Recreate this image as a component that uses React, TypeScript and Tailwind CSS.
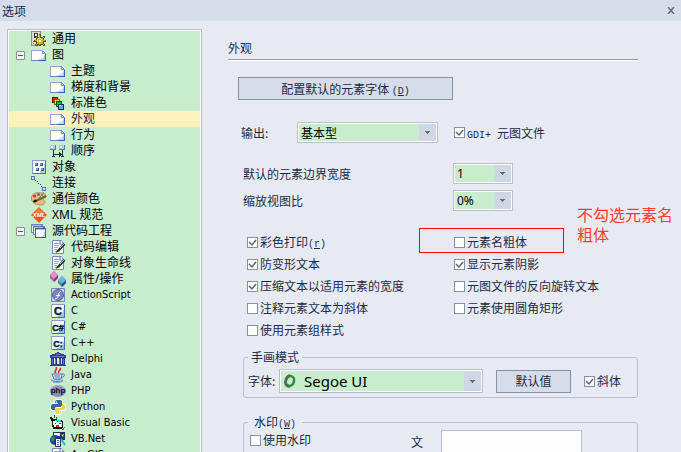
import React, { useState } from 'react'
import clsx from 'clsx'

type IconProps = {
  children: React.ReactNode
  smooth?: boolean
}

const Icon = ({ children, smooth }: IconProps) => (
  <svg
    viewBox="0 0 16 16"
    className="h-4 w-4 shrink-0"
    shapeRendering={smooth ? 'auto' : 'crispEdges'}
    fill="none"
    aria-hidden="true"
  >
    {children}
  </svg>
)

const GeneralIcon = () => (
  <Icon>
    <path d="M0 0h10v15H0z" fill="#8f8f8a" />
    <path d="M1 1h8v13H1z" fill="#dcdcd6" />
    <path d="M3 2h4v5H3z" fill="#333" />
    <path d="M4 3h2v2H4z" fill="#fff" />
    <path d="M2 10h1v1H2zM2 12h1v1H2z" fill="#555" />
    <path d="M8 3h2v12H8zM3 9h12v2H3zM5 5h2v2H5zM12 5h2v2h-2zM4 13h3v2H4zM12 13h2v2h-2zM5 6h8v8H5z" fill="#5d5404" />
    <path d="M8 4h1v10H8zM4 9h10v1H4zM6 7h6v6H6zM5 6h1v1H5zM12 6h1v1h-1zM5 13h1v1H5zM12 13h1v1h-1z" fill="#c4b42c" />
    <path d="M7 7h3v1H7zM6 8h1v3H6zM10 8h1v1h-1z" fill="#f7f09a" />
    <path d="M8 9h2v2H8z" fill="#f4f4ea" />
  </Icon>
)

const PageIcon = () => (
  <Icon>
    <path d="M0 3h12l3 3v8H0z" fill="#fff" />
    <path d="M6 13h8V8h-1v1h-1v1h-2v1H8v1H6z" fill="#dbe4fb" />
    <path d="M10 13h4v-4h-1v2h-1v1h-2z" fill="#b7c9f5" />
    <path d="M0 3h12v1H1v9H0z" fill="#9b9fd2" />
    <path d="M0 13h8v1H0z" fill="#6b83cc" />
    <path d="M8 13h7v1H8z" fill="#3559bd" />
    <path d="M14 7h1v7h-1z" fill="#3c62cf" />
    <path d="M11 3h1v1h1v1h1v1h1v1h-4z" fill="#7d8fd2" />
    <path d="M12 5h1v1h-1z" fill="#fff" />
  </Icon>
)

const ColorsIcon = () => (
  <Icon>
    <path d="M2 2h6v6H2z" fill="#6b0000" />
    <path d="M3 3h4v4H3z" fill="#f01818" />
    <path d="M4 4h6v6H4z" fill="#6a6200" />
    <path d="M5 5h4v4H5z" fill="#f2e40c" />
    <path d="M6 6h6v6H6z" fill="#064f06" />
    <path d="M7 7h4v4H7z" fill="#1cc81c" />
    <path d="M8 9h6v6H8z" fill="#0e2a66" />
    <path d="M9 10h4v4H9z" fill="#5fa8f4" />
    <path d="M9 10h2v1H9z" fill="#c5e2ff" />
  </Icon>
)

const SequenceIcon = () => (
  <Icon>
    <path d="M0 2h6v5H0zM9 2h6v5H9z" fill="#5f7898" />
    <path d="M0 2h5v4H0zM9 2h5v4H9z" fill="#9fd0ee" />
    <path d="M1 3h2v2H1zM10 3h2v2h-2z" fill="#fff" />
    <path d="M3 7h1v7H3zM12 7h1v7h-1zM4 11h8v1H4zM10 10h1v3h-1zM9 9h1v5H9zM2 13h3v1H2zM11 13h3v1h-3z" fill="#222d3a" />
  </Icon>
)

const ObjectIcon = () => (
  <Icon>
    <path d="M1 1h14v14H1z" fill="#8797cf" />
    <path d="M2 2h12v12H2z" fill="#f4f7ff" />
    <path d="M9 14h5V5h-1v4h-1v3H9z" fill="#b9c9f2" />
    <path d="M14 2h1v13H2v-1h12z" fill="#4a66b6" />
    <path d="M4 4h3v3H4zM9 4h3v3H9zM5 9h3v3H5zM10 9h3v3h-3z" fill="#42528f" />
    <path d="M4 4h2v2H4zM9 4h2v2H9zM5 9h2v2H5zM10 9h2v2h-2z" fill="#7d90cc" />
  </Icon>
)

const LinkIcon = () => (
  <Icon>
    <path d="M0 1h4v4H0zM11 12h4v4h-4z" fill="#5273b9" />
    <path d="M1 2h2v2H1zM12 13h2v2h-2z" fill="#d6e6ff" />
    <path d="M4 5h1v1H4zM6 6h1v1H6zM7 8h1v1H7zM9 9h1v1H9zM10 11h1v1h-1z" fill="#34445c" />
  </Icon>
)

const PaletteIcon = () => (
  <Icon smooth>
    <path d="M1 5c1-3 6-4 9-3 3 0 6 2 5 4-1 1-3 1-3 3 2 1 3 2 1 4-3 2-9 1-11-2C0 9 0 7 1 5z" fill="#e3bd84" stroke="#b98c50" />
    <circle cx="3.500" cy="5" r="1.500" fill="#e22525" />
    <circle cx="7.500" cy="3.500" r="1.500" fill="#4b6fe0" />
    <circle cx="11" cy="4" r="1" fill="#34b44a" />
    <path d="M13 1L6 10" stroke="#6c86b8" strokeWidth="1" />
    <path d="M15 5L5 10" stroke="#7a6a12" strokeWidth="2" />
    <path d="M2 11c1-3 3-3 4-1 0 1-2 2-4 1z" fill="#111" />
  </Icon>
)

const XmlIcon = () => (
  <Icon smooth>
    <path d="M8 0l8 8-8 8-8-8z" fill="#f2560e" />
    <path d="M8 1l7 7-7-2-7 2z" fill="#ff7a2c" />
    <text x="8" y="10" textAnchor="middle" fontSize="6" fontWeight="700" fontStyle="italic" fontFamily="Liberation Sans, sans-serif" fill="#fff">XML</text>
  </Icon>
)

const CodeProjectIcon = () => (
  <Icon>
    <path d="M0 1h12v9H0z" fill="#6f86c4" />
    <path d="M1 3h10v6H1z" fill="#fff" />
    <path d="M2 3h12v9H2z" fill="#5d76b8" />
    <path d="M3 5h10v6H3z" fill="#fff" />
    <path d="M4 5h11v10H4z" fill="#45589a" />
    <path d="M5 7h9v7H5z" fill="#fff" />
    <path d="M5 6h9v1H5zM3 4h9v1H3zM1 2h9v1H1z" fill="#a5bcec" />
    <path d="M10 14h4v-5h-1v3h-1v1h-2z" fill="#b7c9f5" />
  </Icon>
)

const EditIcon = () => (
  <Icon smooth>
    <path d="M2.500 1.500h9l2 3v10h-11z" fill="#fff" stroke="#7886b4" />
    <path d="M4 4.500h5M4 6.500h5M4 8.500h4M4 10.500h3M4 12.500h3" stroke="#9aa6c8" />
    <path d="M10 1v4h3" stroke="#5b6ca6" />
    <path d="M14.500 5L8 12" stroke="#1d2a3e" strokeWidth="2.500" />
    <path d="M14 5l-4 4" stroke="#7fa8d4" />
    <path d="M6 14l1-3 2 1z" fill="#111" />
  </Icon>
)

const PropertyIcon = () => (
  <Icon smooth>
    <path d="M4 0l4 4v3l-4 4-4-4V4z" fill="#b45aa4" />
    <path d="M4 0l4 4-4 4-4-4z" fill="#e08fd4" />
    <path d="M4 8l4-4v3l-4 4z" fill="#8c3a80" />
    <path d="M12 5l4 4v3l-4 4-4-4V9z" fill="#3e7fb0" />
    <path d="M12 5l4 4-4 4-4-4z" fill="#74b4dc" />
    <path d="M12 13l4-4v3l-4 4z" fill="#26587f" />
  </Icon>
)

const ActionScriptIcon = () => (
  <Icon smooth>
    <path d="M1.500 1.500h13v13h-13z" fill="#cdd5ef" stroke="#7482bb" />
    <circle cx="8" cy="8" r="5.500" fill="#7d84c4" stroke="#5a60a8" />
    <path d="M11 4.500c-3 0-2 7.500-6 7.500M6 8.500h4" stroke="#fff" />
  </Icon>
)

// Shared square tile of the C family
const LetterIcon = ({ letter }: { letter: string }) => (
  <Icon smooth>
    <path d="M1.500 1.500h13v13h-13z" fill="#f5f8ff" stroke="#8b9bd0" />
    <path d="M14 6v8H6l6-3z" fill="#a9bdec" />
    <path d="M14.500 2v12.500H2" stroke="#4a66b6" />
    <text x="8" y="12" textAnchor="middle" fontSize={letter.length > 1 ? 9 : 11} fontWeight="700" fontFamily="Liberation Sans, sans-serif" fill="#101c3c" stroke="#101c3c" strokeWidth="0.5">{letter}</text>
  </Icon>
)

const DelphiIcon = () => (
  <Icon>
    <path d="M7 1h2v1h2v1h3v1h2v3H0V4h2V3h3V2h2z" fill="#343c94" />
    <path d="M6 3h4v1H6zM2 5h12v1H2z" fill="#6f78c4" />
    <path d="M1 7h3v6H1zM5 7h2v6H5zM9 7h2v6H9zM12 7h3v6h-3z" fill="#2b3284" />
    <path d="M2 8h1v5H2zM5 8h1v5H5zM9 8h1v5H9zM13 8h1v5h-1z" fill="#6f78c4" />
    <path d="M1 13h14v1H1zM0 14h16v1H0z" fill="#343c94" />
  </Icon>
)

const JavaIcon = () => (
  <Icon smooth>
    <path d="M6 6C3 4 8 3 6 0M9 6c-2-2 3-3 1-5" stroke="#e5232b" strokeWidth="1.500" />
    <path d="M2 7h10l-1 5c-2 1-5 1-7 0z" fill="#dce9fa" stroke="#4a76b6" />
    <path d="M12 7c4-1 3 3-1 4" stroke="#4a76b6" />
    <path d="M4 9h6M5 11h5M1 13c3 2 9 2 12 0" stroke="#4a76b6" />
    <path d="M3 15c3 1 7 1 10-1" stroke="#7fa0d4" />
  </Icon>
)

const PhpIcon = () => (
  <Icon smooth>
    <ellipse cx="8" cy="8" rx="8" ry="6" fill="#8d8bb4" />
    <path d="M2 5c3-3 9-3 12 0" stroke="#b9b8dc" />
    <text x="8" y="10" textAnchor="middle" fontSize="8" fontWeight="700" fontFamily="Liberation Sans, sans-serif" fill="#111">php</text>
  </Icon>
)

const PythonIcon = () => (
  <Icon smooth>
    <path d="M8 1c-3 0-3 1-3 3v1H3C1 5 1 7 1 8s0 3 2 3h2V9c0-1 1-1 2-1h3c1 0 2-1 2-2V3c0-2-1-2-4-2zM8 15c3 0 3-1 3-3v-1h2c2 0 2-2 2-3s0-3-2-3h-1v2c0 1-1 2-2 2H7c-1 0-2 1-2 2v2c0 2 1 2 3 2z" stroke="#fff" strokeWidth="2" />
    <path d="M8 1c-3 0-3 1-3 3h3v1H3C1 5 1 7 1 8s0 3 2 3h2V9c0-1 1-1 2-1h3c1 0 2-1 2-2V3c0-2-1-2-4-2z" fill="#3a6a94" />
    <path d="M8 15c3 0 3-1 3-3H8v-1h5c2 0 2-2 2-3s0-3-2-3h-1v2c0 1-1 2-2 2H7c-1 0-2 1-2 2v2c0 2 1 2 3 2z" fill="#f8cf44" />
    <circle cx="6.500" cy="3" r="0.700" fill="#fff" />
    <circle cx="9.500" cy="13" r="0.700" fill="#fff" />
  </Icon>
)

const VisualBasicIcon = () => (
  <Icon>
    <path d="M0 2h2v1h1v1h2v1H3v1H1V4H0z" fill="#111" />
    <path d="M4 0h1v3H4zM6 2h1v2H6z" fill="#14691c" />
    <path d="M2 5h2V4h3v1h5v1h1v7h-1v1H3v-2H2z" fill="#111" />
    <path d="M3 6h2V5h2v2h5v5H4v-2H3z" fill="#fff" />
    <path d="M5 5h6v2H8V6H5z" fill="#27d0d8" />
    <path d="M5 8h1v1H5zM9 8h2v1H9z" fill="#222" />
    <path d="M6 10h3v2H6z" fill="#d02030" />
    <path d="M12 14h1v-1h1v-1h1v1h-1v2h-2z" fill="#777" />
  </Icon>
)

const VbNetIcon = () => (
  <Icon smooth>
    <path d="M3 1h12v8H3z" fill="#23345c" />
    <path d="M4 2h6v3H4z" fill="#e9f2ff" />
    <path d="M10 2l2 2 2-1-1 3z" fill="#f2e266" />
    <circle cx="5" cy="9" r="5" fill="#2432bd" />
    <path d="M1 7c2-2 4-2 4 0s-2 2-1 4c-2 0-3-2-3-4z" fill="#1b9b32" />
    <path d="M5.500 7.500h5v8h-5z" fill="#fff" stroke="#222d4a" />
    <path d="M7 9.500h2M7 11.500h2M7 13.500h2" stroke="#5576b8" />
    <path d="M11 8l4 6" stroke="#2bb6c6" strokeWidth="2" />
  </Icon>
)

type Node = {
  label: string
  icon: React.ReactNode
  children?: Node[]
}

const nodes: Node[] = [
  { label: '通用', icon: <GeneralIcon /> },
  {
    label: '图',
    icon: <PageIcon />,
    children: [
      { label: '主题', icon: <PageIcon /> },
      { label: '梯度和背景', icon: <PageIcon /> },
      { label: '标准色', icon: <ColorsIcon /> },
      { label: '外观', icon: <PageIcon /> },
      { label: '行为', icon: <PageIcon /> },
      { label: '顺序', icon: <SequenceIcon /> },
    ],
  },
  { label: '对象', icon: <ObjectIcon /> },
  { label: '连接', icon: <LinkIcon /> },
  { label: '通信颜色', icon: <PaletteIcon /> },
  { label: 'XML 规范', icon: <XmlIcon /> },
  {
    label: '源代码工程',
    icon: <CodeProjectIcon />,
    children: [
      { label: '代码编辑', icon: <EditIcon /> },
      { label: '对象生命线', icon: <EditIcon /> },
      { label: '属性/操作', icon: <PropertyIcon /> },
      { label: 'ActionScript', icon: <ActionScriptIcon /> },
      { label: 'C', icon: <LetterIcon letter="C" /> },
      { label: 'C#', icon: <LetterIcon letter="C#" /> },
      { label: 'C++', icon: <LetterIcon letter="C:" /> },
      { label: 'Delphi', icon: <DelphiIcon /> },
      { label: 'Java', icon: <JavaIcon /> },
      { label: 'PHP', icon: <PhpIcon /> },
      { label: 'Python', icon: <PythonIcon /> },
      { label: 'Visual Basic', icon: <VisualBasicIcon /> },
      { label: 'VB.Net', icon: <VbNetIcon /> },
      { label: 'ArcGIS', icon: <EditIcon /> },
    ],
  },
]

interface TreeProps {
  items: Node[]
  selected: string
  onSelect: (label: string) => void
  nested?: boolean
}

const isLatin = (label: string) => /^[\x20-\x7e]+$/.test(label)

const Tree = ({ items, selected, onSelect, nested }: TreeProps) => {
  const [closed, setClosed] = useState<string[]>([])

  const toggle = (label: string) => {
    setClosed(prev => prev.includes(label) ? prev.filter(l => l !== label) : [...prev, label])
  }

  return (
    <ul>
      {items.map(item => (
        <li key={item.label}>
          <div className={clsx('flex h-4 items-center', nested ? 'pl-[41px]' : 'pl-[7px]', item.label === selected && 'bg-[#fff1bb] text-[#1b2a45]')}>
            {!nested && (
              <div className="w-[15px]">
                {item.children && (
                  <button
                    aria-label={item.label}
                    onClick={() => toggle(item.label)}
                    className="flex h-[9px] w-[9px] items-center justify-center rounded-[1px] border border-[#8c8c96] bg-[#f4f4f6]"
                  >
                    <span className="h-px w-[5px] bg-[#3b55a5]" />
                  </button>
                )}
              </div>
            )}
            <button className="flex h-4 items-center gap-[5px] whitespace-nowrap" onClick={() => onSelect(item.label)}>
              {item.icon}
              <span className={isLatin(item.label) ? "font-['DejaVu_Sans_Condensed','DejaVu_Sans',sans-serif] text-[11px]" : ''}>{item.label}</span>
            </button>
          </div>
          {item.children && !closed.includes(item.label) && (
            <Tree items={item.children} selected={selected} onSelect={onSelect} nested />
          )}
        </li>
      ))}
    </ul>
  )
}

interface ComboProps {
  id: string
  options: string[]
  box: string
  text: string
  children?: React.ReactNode
}

const Combo = ({ id, options, box, text, children }: ComboProps) => (
  <div className={clsx('relative shrink-0 border border-[#bcbfc9] bg-white p-px', box)}>
    <select id={id} className={clsx('block h-full w-full appearance-none rounded-none bg-[#c7edcc] pr-[17px] text-black outline-none', text)}>
      {options.map(option => <option key={option}>{option}</option>)}
    </select>
    {children}
    <span className="pointer-events-none absolute inset-y-px right-px flex w-[17px] items-center justify-center bg-[#cfd6e6]">
      <svg viewBox="0 0 5 3" className="h-[3px] w-[5px]" shapeRendering="crispEdges"><path d="M0 0h5v1H4v1H3v1H2V2H1V1H0z" fill="#6d6d6d" /></svg>
    </span>
  </div>
)

interface CheckProps {
  checked?: boolean
  children: React.ReactNode
}

const Check = ({ checked, children }: CheckProps) => (
  <label className="flex items-center gap-[2px] whitespace-nowrap">
    <span className="grid">
      <input type="checkbox" defaultChecked={checked} className="peer h-[11px] w-[11px] appearance-none border border-[#8490a5] bg-white [grid-area:1/1]" />
      <svg viewBox="0 0 11 11" className="pointer-events-none hidden h-[11px] w-[11px] [grid-area:1/1] peer-checked:block" fill="none" aria-hidden="true">
        <path d="M2 5l3 3 4-5" stroke="#636363" strokeWidth="1.5" />
      </svg>
    </span>
    {children}
  </label>
)

// Half-width latin next to the Chinese labels
const Latin = ({ children }: { children: React.ReactNode }) => (
  <span className="font-['Liberation_Mono',monospace] text-[10px] leading-none">{children}</span>
)

const App = () => {
  const [selected, setSelected] = useState('外观')

  return (
    <div className="flex h-screen flex-col overflow-hidden bg-[#e7eaf3] font-['Noto_Sans_CJK_SC',sans-serif] text-[12px] leading-4 text-[#1b2a45]">
      <header className="flex h-[21px] shrink-0 items-center justify-between bg-[#d6dce9] pl-[2px] pr-[6px]">
        <h1>选项</h1>
        <button aria-label="关闭">
          <svg viewBox="0 0 8 7" className="h-[7px] w-2" fill="none"><path d="M1 0l6 7M7 0L1 7" stroke="#6b6b6b" strokeWidth="1.5" /></svg>
        </button>
      </header>

      <div className="flex min-h-0 flex-1">
        <nav className="ml-[7px] mt-2 w-[195px] shrink-0 overflow-hidden border border-b-0 border-[#bcbcc8] bg-white p-px pb-0 font-['Noto_Sans','Noto_Sans_CJK_SC',sans-serif] text-black">
          <div className="min-h-full bg-[#c7edcc]">
            <Tree items={nodes} selected={selected} onSelect={setSelected} />
          </div>
        </nav>

        <main className="min-w-0 flex-1 pl-[26px] pr-[43px] pt-[19px]">
          <h2 className="border-b border-[#999a9f] pb-[3px]">{selected}</h2>
          <div className="h-px bg-white" />

          <button className="ml-[10px] mt-4 block h-[23px] w-[215px] border border-[#8490a5] bg-[#d6dce9]">
            配置默认的元素字体 <Latin>(<u>D</u>)</Latin>
          </button>

          <div className="ml-[13px] mt-[22px] flex items-center">
            <label htmlFor="output" className="w-14">输出:</label>
            <Combo id="output" options={['基本型', '增强型']} box="h-[21px] w-[141px]" text="pl-[2px]" />
            <div className="ml-4"><Check checked><span><Latin>GDI+ </Latin>元图文件</span></Check></div>
          </div>

          <div className="ml-[15px] mt-5 flex flex-col gap-[6px]">
            <div className="flex items-center">
              <label htmlFor="border" className="w-[210px]">默认的元素边界宽度</label>
              <Combo id="border" options={['1', '2', '3']} box="h-[21px] w-[60px]" text="pl-[2px] font-['Noto_Sans',sans-serif]" />
            </div>
            <div className="flex items-center">
              <label htmlFor="zoom" className="w-[210px]">缩放视图比</label>
              <Combo id="zoom" options={['0%', '50%', '100%']} box="h-[21px] w-[60px]" text="pl-[2px] font-['Noto_Sans',sans-serif]" />
            </div>
          </div>

          <div className="ml-[19px] mt-5 grid auto-rows-[22px] grid-cols-[207px_1fr] items-center">
            <Check checked><span>彩色打印<Latin>(<u>r</u>)</Latin></span></Check>
            <div className="relative">
              <Check>元素名粗体</Check>
              <div className="pointer-events-none absolute -left-[35px] -top-[6px] h-[25px] w-[145px] border border-[#ff0000]" />
              <p className="absolute -top-[30px] left-[123px] w-24 text-[16px] leading-5 text-[#ff3b30]">不勾选元素名粗体</p>
            </div>
            <Check checked>防变形文本</Check>
            <Check checked>显示元素阴影</Check>
            <Check checked>压缩文本以适用元素的宽度</Check>
            <Check>元图文件的反向旋转文本</Check>
            <Check>注释元素文本为斜体</Check>
            <Check>元素使用圆角矩形</Check>
            <Check>使用元素组样式</Check>
          </div>

          <fieldset className="ml-[15px] mt-2 rounded-[3px] border border-[#bcbfc9] px-1 pb-1">
            <legend className="px-[3px]">手画模式</legend>
            <div className="flex items-center pt-1">
              <label htmlFor="font" className="w-[31px]">字体:</label>
              <Combo id="font" options={['Segoe UI', 'Arial']} box="h-6 w-[204px]" text="pl-[23px] font-['Noto_Sans',sans-serif] text-[15px] leading-5">
                <svg viewBox="0 0 12 14" className="pointer-events-none absolute left-1 top-1 h-[14px] w-3" fill="none" aria-hidden="true">
                  <ellipse cx="6" cy="7" rx="4" ry="5" transform="rotate(20 6 7)" stroke="#2f8a3c" strokeWidth="2.500" />
                  <path d="M6 1C2 2 0 8 2 11c1 2 3 2 4 1" stroke="#59645c" strokeWidth="2" />
                </svg>
              </Combo>
              <button className="ml-[13px] mr-[13px] h-[23px] w-[75px] shrink-0 border border-[#8490a5] bg-[#d6dce9]">默认值</button>
              <Check checked>斜体</Check>
            </div>
          </fieldset>

          <fieldset className="ml-[15px] mt-4 rounded-[3px] border border-[#bcbfc9] px-1 pb-1">
            <legend className="px-[6px]">水印<Latin>(<u>W</u>)</Latin></legend>
            <div className="flex items-start pl-[2px]">
              <div className="w-[161px] pt-[2px]"><Check>使用水印</Check></div>
              <label htmlFor="watermark" className="w-[30px] pt-1">文</label>
              <input id="watermark" type="text" className="h-[23px] w-[141px] border border-[#bcbfc9] bg-[#fdfdfd] px-1 outline-none" />
            </div>
          </fieldset>
        </main>
      </div>
    </div>
  )
}

export default App
